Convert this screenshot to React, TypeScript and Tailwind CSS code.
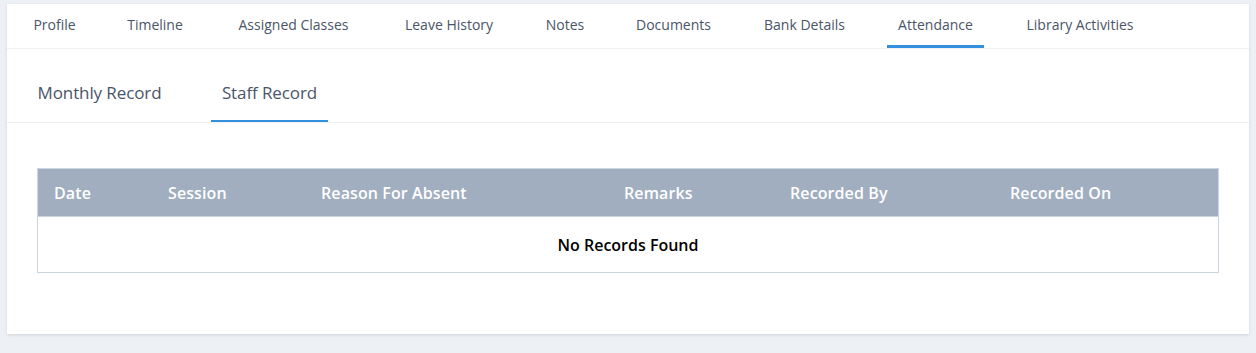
import React from 'react';

const mainTabs = [
  { label: 'Profile', w: 'w-[63px]' },
  { label: 'Timeline', w: 'w-[78px]' },
  { label: 'Assigned Classes', w: 'w-[139px]' },
  { label: 'Leave History', w: 'w-[112px]' },
  { label: 'Notes', w: 'w-[60px]' },
  { label: 'Documents', w: 'w-[97px]' },
  { label: 'Bank Details', w: 'w-[105px]' },
  { label: 'Attendance', w: 'w-[97px]', active: true },
  { label: 'Library Activities', w: 'w-[132px]' },
];

const columns = [
  { label: 'Date', w: 'w-[114px]' },
  { label: 'Session', w: 'w-[153px]' },
  { label: 'Reason For Absent', w: 'w-[303px]' },
  { label: 'Remarks', w: 'w-[166px]' },
  { label: 'Recorded By', w: 'w-[220px]' },
  { label: 'Recorded On', w: 'flex-1' },
];

export default function App() {
  return (
    <div className="min-h-[353px] bg-[#edf1f5] pt-[4px] px-[7px] font-['Open_Sans','Noto_Sans',sans-serif]">
      <div className="bg-white shadow-[0_1px_3px_rgba(0,0,0,0.12)] h-[330px]">
        {/* top tabs */}
        <div className="flex h-[45px] pl-[16px] gap-[30px] border-b border-[#edf0f3]">
          {mainTabs.map((t) => (
            <div
              key={t.label}
              className={`${t.w} flex items-center justify-center whitespace-nowrap text-[14px] text-[#4a5568] border-b-[3px] ${
                t.active ? 'border-[#3490dc]' : 'border-transparent'
              }`}
            >
              {t.label}
            </div>
          ))}
        </div>

        {/* sub tabs */}
        <div className="flex h-[74px] pl-[20px] gap-[39px] border-b border-[#edf0f3]">
          <div className="w-[145px] flex items-center justify-center pt-[16px] whitespace-nowrap text-[17px] tracking-[-0.1px] text-[#4a5568] border-b-2 border-transparent">
            Monthly Record
          </div>
          <div className="w-[117px] flex items-center justify-center pt-[16px] whitespace-nowrap text-[17px] tracking-[-0.1px] text-[#4a5568] border-b-2 border-[#3490dc]">
            Staff Record
          </div>
        </div>

        {/* table */}
        <div className="px-[30px] pt-[45px]">
          <div className="border border-[#cbd5e0]">
            <div className="flex h-[47px] bg-[#a0aec0] text-white font-semibold text-[16px] tracking-[0.1px]">
              {columns.map((c) => (
                <div key={c.label} className={`${c.w} flex items-center pl-[16px] whitespace-nowrap`}>
                  {c.label}
                </div>
              ))}
            </div>
            <div className="h-[56px] border-t border-[#cbd5e0] flex items-center justify-center text-[16px] font-semibold text-black">
              No Records Found
            </div>
          </div>
        </div>
      </div>
    </div>
  );
}
